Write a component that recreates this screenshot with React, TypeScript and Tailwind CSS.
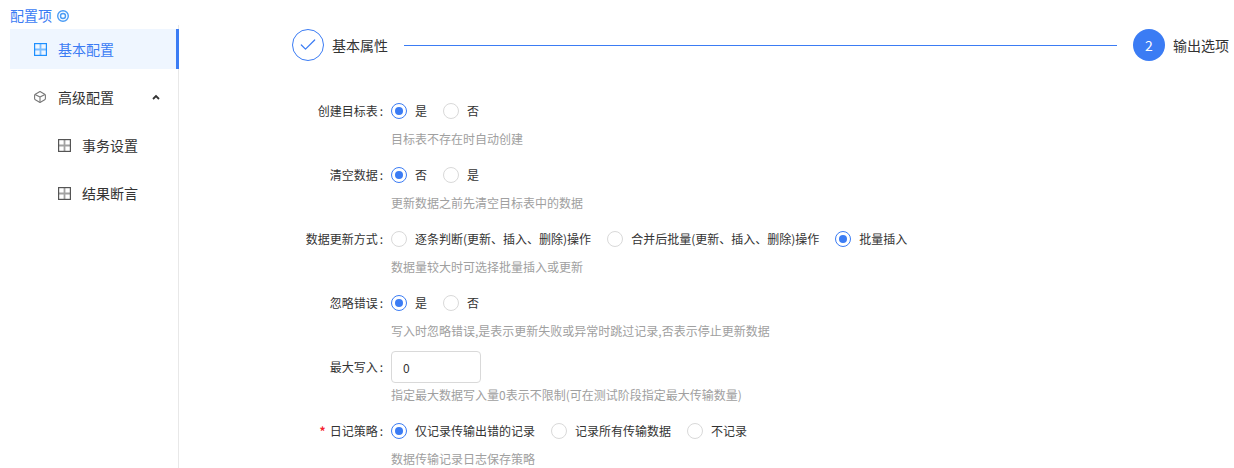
import { Check } from "lucide-react";

function GridIcon({ className }: { className: string }) {
  return (
    <svg viewBox="0 0 13 13" className={className} fill="none" stroke="currentColor">
      <rect x="0.6" y="0.6" width="11.8" height="11.8" strokeWidth="1.2" />
      <path d="M6.5 0V13M0 6.5H13" strokeWidth="1.8" opacity="0.55" />
    </svg>
  );
}

function BoxIcon() {
  return (
    <svg
      viewBox="0 0 12 12"
      className="w-3 h-3 text-[#777]"
      fill="none"
      stroke="currentColor"
      strokeWidth="1.1"
      strokeLinejoin="round"
    >
      <path d="M6 0.6 10.7 3.2Q11.4 3.6 11.4 4.4V7.6Q11.4 8.4 10.7 8.8L6 11.4 1.3 8.8Q0.6 8.4 0.6 7.6V4.4Q0.6 3.6 1.3 3.2Z" />
      <path d="M1 3.4 6 6 11 3.4M6 6V11.3" />
    </svg>
  );
}

function Radio({ label, checked }: { label: string; checked?: boolean }) {
  return (
    <label className="flex items-center mr-4">
      <span
        className={
          checked
            ? "w-4 h-4 rounded-full border border-[#3b7cf4] flex items-center justify-center"
            : "w-4 h-4 rounded-full border border-[#d9d9d9] bg-white"
        }
      >
        {checked && <span className="w-2 h-2 rounded-full bg-[#3b7cf4]" />}
      </span>
      <span className="ml-2 text-[#333]">{label}</span>
    </label>
  );
}

function FormRow({
  label,
  required,
  help,
  children,
}: {
  label: string;
  required?: boolean;
  help: string;
  children: React.ReactNode;
}) {
  return (
    <div className="flex h-16 text-xs">
      <div className="w-[212px] h-8 flex items-center justify-end text-[#333] shrink-0">
        {required && <span className="text-[#f5222d] font-bold mr-1">*</span>}
        {label}
        <span className="ml-[2px] mr-[8px]">:</span>
      </div>
      <div className="flex flex-col">
        <div className="h-8 flex items-center">{children}</div>
        <div className="h-6 flex items-center text-[#a0a0a0]">{help}</div>
      </div>
    </div>
  );
}

export default function App() {
  return (
    <div
      className="w-[1234px] h-[468px] overflow-hidden bg-white"
      style={{ fontFamily: '"Noto Sans CJK SC", "Noto Sans", sans-serif' }}
    >
      <div className="flex h-full">
        <aside className="w-[179px] shrink-0 h-full flex flex-col">
          <div className="h-[25px] pt-[7px] pl-[10px] flex items-start text-sm text-[#3b7cf4] leading-4">
            配置项
            <svg viewBox="0 0 14 14" className="w-3.5 h-3.5 ml-1 mt-[2px] text-[#4a9cf5]" fill="none" stroke="currentColor">
              <circle cx="7" cy="7" r="5.3" strokeWidth="1.4" />
              <circle cx="7" cy="7" r="2.5" strokeWidth="1.4" />
            </svg>
          </div>
          <nav className="flex-1 pt-1 pl-[10px] text-sm border-r border-[#e8e8e8]">
            <div className="h-10 bg-[#eff6ff] border-r-[3px] border-[#3b7cf4] flex items-center pl-6 text-[#3b7cf4] -mr-px">
              <GridIcon className="w-[13px] h-[13px] text-[#1e90ff]" />
              <span className="ml-[11px]">基本配置</span>
            </div>
            <div className="h-10 mt-2 flex items-center pl-6 text-[#333]">
              <BoxIcon />
              <span className="ml-3">高级配置</span>
              <svg viewBox="0 0 8 6" className="w-2 h-1.5 ml-[38px] text-[#333]" fill="none" stroke="currentColor" strokeWidth="1.8">
                <path d="M1 5 4 2 7 5" />
              </svg>
            </div>
            <div className="h-10 mt-2 flex items-center pl-12 text-[#333]">
              <GridIcon className="w-[13px] h-[13px] text-[#555]" />
              <span className="ml-[11px]">事务设置</span>
            </div>
            <div className="h-10 mt-2 flex items-center pl-12 text-[#333]">
              <GridIcon className="w-[13px] h-[13px] text-[#555]" />
              <span className="ml-[11px]">结果断言</span>
            </div>
          </nav>
        </aside>

        <main className="flex-1 min-w-0">
          <div className="h-[79px] pt-[29px] pl-[113px] pr-[5px] flex items-start">
            <div className="w-8 h-8 rounded-full border border-[#3b7cf4] flex items-center justify-center text-[#3b7cf4] shrink-0">
              <Check className="w-5 h-5" strokeWidth={1.5} />
            </div>
            <span className="ml-2 h-8 flex items-center text-sm text-[#333] shrink-0">基本属性</span>
            <div className="flex-1 h-px bg-[#3b7cf4] mx-4 mt-4" />
            <div className="w-8 h-8 rounded-full bg-[#3b7cf4] flex items-center justify-center text-white text-sm shrink-0">
              2
            </div>
            <span className="ml-2 h-8 flex items-center text-sm text-[#333] shrink-0">输出选项</span>
          </div>

          <div className="pt-4">
            <FormRow label="创建目标表" help="目标表不存在时自动创建">
              <Radio label="是" checked />
              <Radio label="否" />
            </FormRow>
            <FormRow label="清空数据" help="更新数据之前先清空目标表中的数据">
              <Radio label="否" checked />
              <Radio label="是" />
            </FormRow>
            <FormRow label="数据更新方式" help="数据量较大时可选择批量插入或更新">
              <Radio label="逐条判断(更新、插入、删除)操作" />
              <Radio label="合并后批量(更新、插入、删除)操作" />
              <Radio label="批量插入" checked />
            </FormRow>
            <FormRow label="忽略错误" help="写入时忽略错误,是表示更新失败或异常时跳过记录,否表示停止更新数据">
              <Radio label="是" checked />
              <Radio label="否" />
            </FormRow>
            <FormRow label="最大写入" help="指定最大数据写入量0表示不限制(可在测试阶段指定最大传输数量)">
              <input
                readOnly
                value="0"
                className="w-[90px] h-8 border border-[#d9d9d9] rounded pl-[11px] pr-3 text-xs text-[#333] outline-none"
              />
            </FormRow>
            <FormRow label="日记策略" required help="数据传输记录日志保存策略">
              <Radio label="仅记录传输出错的记录" checked />
              <Radio label="记录所有传输数据" />
              <Radio label="不记录" />
            </FormRow>
          </div>
        </main>
      </div>
    </div>
  );
}
